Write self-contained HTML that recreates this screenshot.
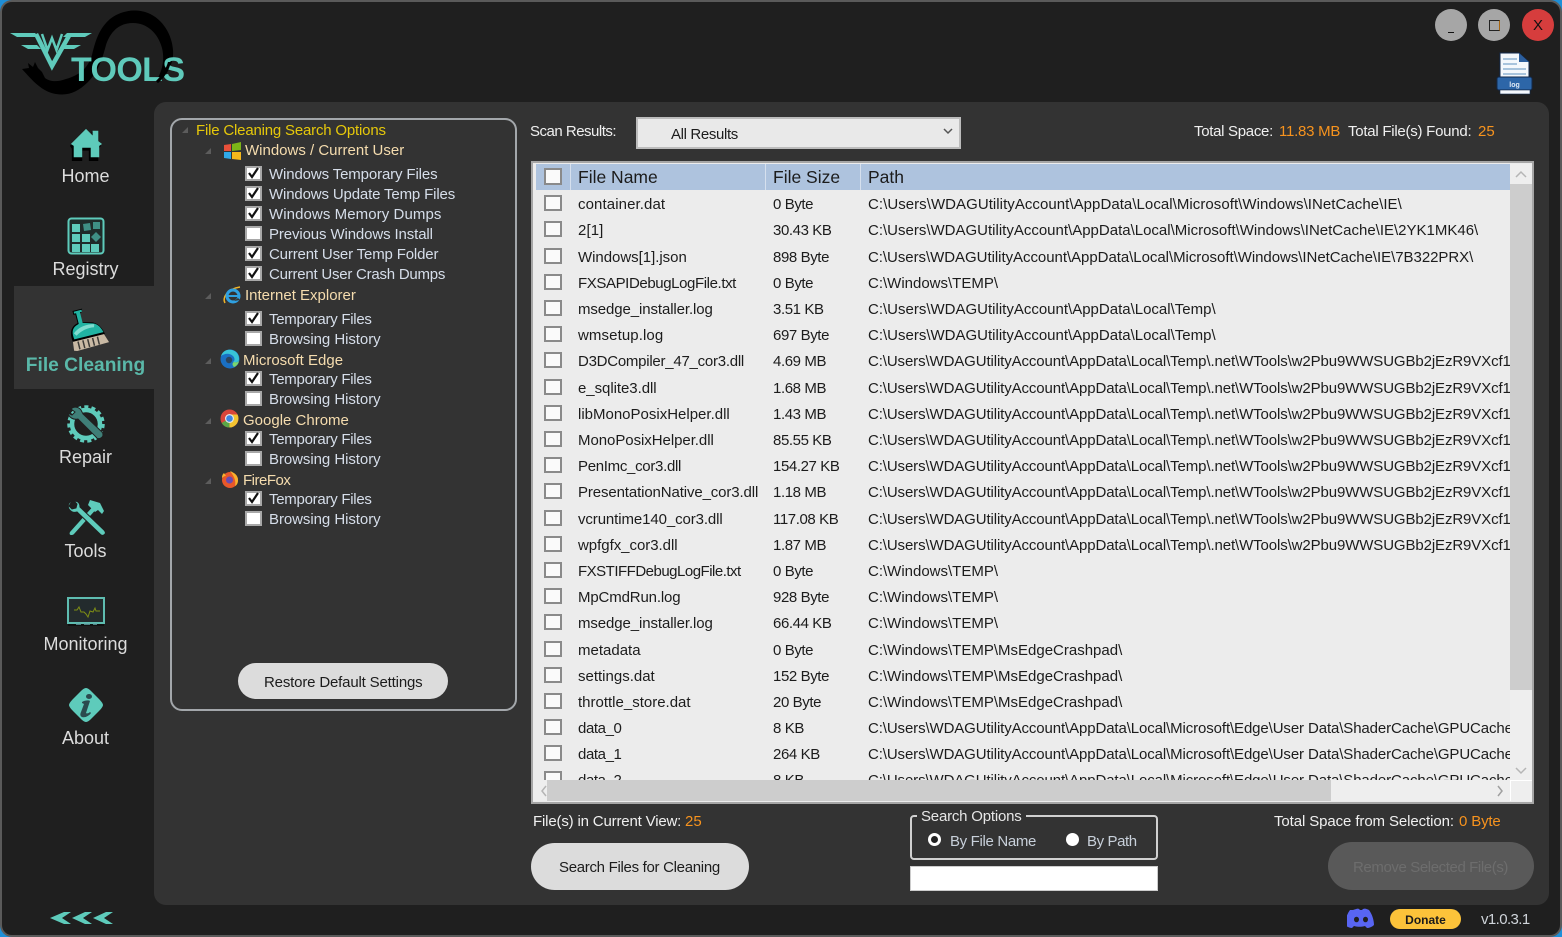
<!DOCTYPE html>
<html><head><meta charset="utf-8"><title>WTools</title>
<style>
*{box-sizing:border-box}
html,body{margin:0;padding:0;width:1562px;height:937px;overflow:hidden;background:#1e8fd8}
body{font-family:"Liberation Sans",sans-serif;position:relative}
#win{position:absolute;left:0;top:0;width:1562px;height:937px;background:#1f1f1f;border:2px solid #5a5a5a;border-radius:12px}
.a{position:absolute}
.t{position:absolute;white-space:nowrap;line-height:20px;height:20px;font-size:15px;color:#e6e6e6;margin-top:1px}
.nav{position:absolute;left:0;width:171px;text-align:center;font-size:18px;line-height:22px;color:#dcdcdc}
.o{color:#f7931e}
.cb{position:absolute;width:17px;height:15px;background:#fff;border:2px solid #a8a8a8}
.cb svg{position:absolute;left:0;top:-2px}
.l{position:absolute;left:269px;white-space:nowrap;line-height:20px;font-size:15px;color:#d6deea;margin-top:1px}
.tf{letter-spacing:-.27px}.bh{letter-spacing:-.06px}
.h{position:absolute;white-space:nowrap;line-height:20px;font-size:15px;color:#f5dcae;margin-top:1px}
.tri{position:absolute;width:0;height:0;border-left:6px solid transparent;border-bottom:6px solid #5c5c5c}
#list{position:absolute;left:536px;top:190px;width:974px;height:590px;overflow:hidden}
.r{position:absolute;left:0;width:974px;height:20px;color:#1c1c1c;font-size:15px;line-height:20px;white-space:nowrap}
.r i{position:absolute;left:8px;top:1px;width:18px;height:16px;background:#fafafa;border:2px solid #8a8a8a}
.r b,.r u,.r s{position:absolute;font-weight:400;text-decoration:none;top:1px}
.r b{left:42px}.r u{left:237px;letter-spacing:-.4px}.r s{left:332px}
.r s.n{letter-spacing:-.11px}
.hd{position:absolute;top:164px;color:#1c1c1c;font-size:17.5px;line-height:26px;white-space:nowrap}
</style></head><body>
<div id="win"></div>

<!-- logo -->
<svg class="a" style="left:0;top:0" width="200" height="105" viewBox="0 0 200 105">
<path d="M22 69L29 68 28 63 33 67 35 62 38 68 42 72 45 78C50 82 58 82 66 79 80 75 88 68 92 55 96 38 100 28 110 19 120 11 135 8 148 13 163 19 172 35 173 50 174 63 168 74 158 83L156 81C162 72 165 60 162 48 158 33 147 23 133 23 118 23 110 33 106 45 102 60 98 72 88 82 78 92 68 96 56 94 42 92 32 80 22 69Z" fill="#000"/>
<g fill="#5fcabb">
<path d="M10 33H35L39 37H17z"/><path d="M92 33H67L63 37H85z"/>
<path d="M21 45H37L41 49H28z"/><path d="M81 45H65L61 49H74z"/>
</g>
<g fill="none" stroke="#5fcabb" stroke-linejoin="miter">
<path d="M36 34L52 66 70 34" stroke-width="4.500"/>
<path d="M42 34L47.500 50 52 38 56.500 50 62 34" stroke-width="2.500"/>
</g>
<text x="71" y="81" font-family="Liberation Sans" font-weight="700" font-size="34" fill="#5fcabb" textLength="114" lengthAdjust="spacing">TOOLS</text>
<path d="M171 62C169 70 165 77 158 83L156 81C162 75 166 69 168 62z" fill="#000"/>
</svg>

<!-- top buttons -->
<div class="a" style="left:1435px;top:9px;width:32px;height:32px;border-radius:50%;background:#a6a6a6"></div>
<div class="a" style="left:1448px;top:32px;width:6px;height:1px;background:#111"></div>
<div class="a" style="left:1478px;top:9px;width:32px;height:32px;border-radius:50%;background:#a6a6a6"></div>
<div class="a" style="left:1489px;top:20px;width:11px;height:11px;border:1px solid #222;border-right-color:#a8650f"></div>
<div class="a" style="left:1522px;top:9px;width:32px;height:32px;border-radius:50%;background:#d63d3d"></div>
<div class="t" style="left:1522px;top:15px;width:32px;text-align:center;color:#111;font-size:15px">X</div>

<!-- log icon -->
<svg class="a" style="left:1495px;top:50px" width="40" height="46" viewBox="0 0 40 46">
<path d="M5 3h19l10 9v22H5z" fill="#f4f8fc" stroke="#11294d" stroke-width="1"/>
<path d="M24 3l10 9H24z" fill="#2c5f9e"/>
<path d="M8 8h14v2H8zM8 13h14v2H8zM8 18h23v2H8zM8 23h23v2H8zM8 28h23v2H8z" fill="#a8c4dd"/>
<rect x="2" y="27" width="35" height="13" rx="2" fill="#2d66a8" stroke="#11294d"/>
<text x="19.500" y="37" font-family="Liberation Sans" font-size="7" font-weight="700" fill="#dfe9f5" text-anchor="middle">log</text>
<rect x="5" y="40" width="30" height="4" fill="#f4f8fc" stroke="#11294d" stroke-width=".6"/>
</svg>

<!-- panel -->
<div class="a" style="left:154px;top:102px;width:1395px;height:803px;background:#333;border-radius:12px"></div>
<div class="a" style="left:14px;top:286px;width:141px;height:103px;background:#333"></div>

<!-- nav icons -->
<svg class="a" style="left:67px;top:127px" width="38" height="34" viewBox="0 0 40 36">
<path d="M4 19L20 2l7 7V4h6v11l4 4-3 3v13H24V24h-7v11H6V22z" fill="#000" transform="translate(-1 1)"/>
<path d="M4 18L20 2l7 7V4h6v11l4 3-3 2v12H25V22h-9v10H7V20z" fill="#5ecbbb"/>
</svg>
<svg class="a" style="left:67px;top:217px" width="38" height="38" viewBox="0 0 38 38">
<rect x="1.500" y="1.500" width="35" height="35" rx="3" fill="#1f2b2a" stroke="#5ecbbb" stroke-width="2"/>
<g fill="#5ecbbb"><rect x="5" y="7" width="8" height="8"/><rect x="5" y="17" width="8" height="8"/><rect x="15" y="17" width="8" height="8"/><rect x="5" y="27" width="8" height="8"/><rect x="15" y="27" width="8" height="8"/><rect x="24" y="27" width="8" height="8"/></g>
<g fill="#3f8f85"><path d="M16 7l7-1 1 7-7 1z"/><rect x="26" y="5" width="7" height="7"/><path d="M29 15l5 5-5 5-5-5z"/></g>
</svg>
<svg class="a" style="left:66px;top:306px;transform:rotate(-14deg)" width="42" height="44" viewBox="0 0 42 44">
<path d="M11 2h10l-2 4h-2v9l11 3c6 3 8 9 9 14H4c-1-7 0-13 6-16l3-1V6h-2z" fill="#000"/>
<path d="M12 3h8v2h-2v11l10 3c5 2 7 7 8 11H6c-1-6 0-11 5-13l3-1V5h-2z" fill="#21b3a2"/>
<path d="M7 24c6-5 14-6 22-4l-1 3c-6-1-13 0-19 4z" fill="#7fdccf"/>
<path d="M4 32h32l3 9-33 1-3-1z" fill="#c9b9a4"/>
<path d="M9 33v8M14 33v8M19 33v8M24 33v8M29 33v8" stroke="#3c3a36" stroke-width="1.500"/>
</svg>
<svg class="a" style="left:66px;top:404px" width="40" height="40" viewBox="0 0 40 40">
<g fill="none" stroke="#5ecbbb"><circle cx="20" cy="20" r="14" stroke-width="4.500"/><circle cx="20" cy="20" r="17" stroke-width="3.500" stroke-dasharray="4 3.120"/></g>
<path d="M5 5c3-3 8-2 10 1l2 4 19 18c2 2 1 5-1 6s-4 1-5-1L12 15c-4 1-9-1-10-6l4 2 3-3z" fill="#3f7f78" stroke="#1f1f1f"/>
</svg>
<svg class="a" style="left:66px;top:498px" width="40" height="40" viewBox="0 0 40 40">
<path d="M30 5L4 34c-1 2 0 3 1 3s2 0 3-1L33 8z" fill="#5ecbbb"/>
<path d="M24 2l10 3 4 8-2 3-4-4-3 2-7-7z" fill="#5ecbbb"/>
<path d="M6 3c-3 1-5 4-3 8 2 3 5 4 8 3l24 23c2 1 3 0 4-1s0-3-1-4L14 9c0-4-2-6-6-6l3 3-1 4-4 1-3-3z" fill="#5ecbbb" stroke="#1f1f1f" stroke-width="1"/>
</svg>
<svg class="a" style="left:67px;top:596px" width="38" height="32" viewBox="0 0 38 32">
<rect x="1" y="2" width="36" height="25" fill="#232b2d" stroke="#5ebcb0" stroke-width="2"/>
<path d="M7 14h3l2-3 2 5h3l2 2 2 3 2-6 3 1 2-4 1 3h4" fill="none" stroke="#7f8f14" stroke-width="1"/>
<path d="M1 29h36" stroke="#000" stroke-width="1"/>
<path d="M9 28h5M17 28h6M26 28h4" stroke="#6aa" stroke-width="1.500"/>
</svg>
<svg class="a" style="left:68px;top:687px" width="36" height="36" viewBox="0 0 36 36">
<path d="M18 1c2 0 4 2 6 4l7 7c3 3 4 5 4 6s-1 3-4 6l-7 7c-2 2-4 4-6 4s-4-2-6-4l-7-7c-3-3-4-5-4-6s1-3 4-6l7-7c2-2 4-4 6-4z" fill="#5ecbbb"/>
<ellipse cx="21" cy="9.500" rx="3" ry="2.500" fill="#2b4a4e"/>
<path d="M14 15c3-2 7-2 8-1l-4 12c1 1 3 0 4-1l1 1c-2 3-6 5-9 4-2-1-2-3-1-5l3-8-2-1z" fill="#2b4a4e"/>
</svg>

<div class="nav" style="top:165px">Home</div>
<div class="nav" style="top:258px">Registry</div>
<div class="nav" style="top:355px;font-weight:700;font-size:19.200px;color:#5ab8a9">File Cleaning</div>
<div class="nav" style="top:446px">Repair</div>
<div class="nav" style="top:540px">Tools</div>
<div class="nav" style="top:633px">Monitoring</div>
<div class="nav" style="top:727px">About</div>

<svg class="a" style="left:48px;top:909px" width="68" height="20" viewBox="0 0 68 20">
<path d="M2 9L16 3h7l-9 6 9 6h-7zM24 9l13-6h7l-9 6 9 6h-7zM45 9l13-6h7l-9 6 9 6h-7z" fill="#5ecbbb"/>
</svg>

<!-- group left -->
<div class="a" style="left:170px;top:118px;width:347px;height:593px;border:2px solid #a3a7ab;border-radius:12px"></div>
<div class="tri" style="left:182px;top:127px"></div>
<div class="h" style="left:196px;top:120px;color:#e6c80a;letter-spacing:-.19px">File Cleaning Search Options</div>
<div class="tri" style="left:205px;top:148px"></div>
<svg class="a" style="left:224px;top:142px" width="17" height="18" viewBox="0 0 17 18">
<path d="M0 3l7-1v7H0z" fill="#e8503a"/><path d="M8 2l9-2v8l-9 1z" fill="#7cb518"/><path d="M0 10h7v7l-7-1z" fill="#2fa8e8"/><path d="M8 10l9 0v8l-9-1z" fill="#f5b81c"/>
</svg>
<div class="h" style="left:245px;top:140px">Windows / Current User</div>
<div class="l" style="top:164px;letter-spacing:-.13px">Windows Temporary Files</div>
<div class="l" style="top:184px;letter-spacing:-.15px">Windows Update Temp Files</div>
<div class="l" style="top:204px;letter-spacing:.08px">Windows Memory Dumps</div>
<div class="l" style="top:224px;letter-spacing:-.12px">Previous Windows Install</div>
<div class="l" style="top:244px;letter-spacing:-.16px">Current User Temp Folder</div>
<div class="l" style="top:264px;letter-spacing:-.23px">Current User Crash Dumps</div>
<div class="tri" style="left:205px;top:293px"></div>
<svg class="a" style="left:223px;top:286px" width="19" height="19" viewBox="0 0 19 19">
<path d="M2 17C-1 12 4 3 17 1" fill="none" stroke="#f0b429" stroke-width="1.500"/>
<circle cx="10" cy="10" r="6" fill="none" stroke="#2fa0e0" stroke-width="3"/>
<path d="M5 10h11" stroke="#2fa0e0" stroke-width="2"/>
<path d="M11 15l6-1-2-2z" fill="#333"/>
</svg>
<div class="h" style="left:245px;top:285px">Internet Explorer</div>
<div class="l tf" style="top:309px">Temporary Files</div>
<div class="l bh" style="top:329px">Browsing History</div>
<div class="tri" style="left:205px;top:358px"></div>
<svg class="a" style="left:220px;top:349px" width="20" height="20" viewBox="0 0 20 20">
<circle cx="10" cy="10" r="9.500" fill="#1a70c4"/>
<path d="M1 7C3 1 9 0 12 1c4 1 7 4 7 9 0 3-3 4-6 3 2-1 2-4 0-6-3-3-8-3-12 0z" fill="#38c4d8"/>
<path d="M19 11c0 2-3 3-5 2-2 1-2 3 0 5 3-1 5-4 5-7z" fill="#7bd66e"/>
<circle cx="9" cy="11" r="3.200" fill="#333" opacity=".7"/>
</svg>
<div class="h" style="left:243px;top:350px">Microsoft Edge</div>
<div class="l tf" style="top:369px">Temporary Files</div>
<div class="l bh" style="top:389px">Browsing History</div>
<div class="tri" style="left:205px;top:418px"></div>
<svg class="a" style="left:220px;top:409px" width="19" height="19" viewBox="0 0 19 19">
<circle cx="9.500" cy="9.500" r="9" fill="#d9463a"/>
<path d="M9.500 9.500L1.700 14a9 9 0 0 0 7.800 4.500c1 0 2 0 3-.5z" fill="#5aa646"/>
<path d="M9.500 5.500h8A9 9 0 0 1 9.500 18.500z" fill="#f3c431"/>
<circle cx="9.500" cy="9.500" r="4.500" fill="#e8e8e8"/><circle cx="9.500" cy="9.500" r="3.300" fill="#3f85e0"/>
</svg>
<div class="h" style="left:243px;top:410px">Google Chrome</div>
<div class="l tf" style="top:429px">Temporary Files</div>
<div class="l bh" style="top:449px">Browsing History</div>
<div class="tri" style="left:205px;top:478px"></div>
<svg class="a" style="left:221px;top:470px" width="18" height="18" viewBox="0 0 18 18">
<circle cx="9" cy="10" r="8" fill="#e8582a"/>
<path d="M9 1c5 2 8 5 8 9 0 3-1 5-3 6 1-4 0-9-5-15z" fill="#f7b22c"/>
<path d="M1 8c0-3 1-4 2-5l2 3c-2 0-3 1-4 2z" fill="#f7b22c"/>
<circle cx="8.500" cy="10" r="3.500" fill="#6a4bb0"/>
</svg>
<div class="h" style="left:243px;top:470px;letter-spacing:-.5px">FireFox</div>
<div class="l tf" style="top:489px">Temporary Files</div>
<div class="l bh" style="top:509px">Browsing History</div>

<!-- left checkboxes -->
<div class="cb" style="left:245px;top:166px"><svg width="13" height="14" viewBox="0 0 13 14"><path d="M2 7l3 4 6-9" fill="none" stroke="#111" stroke-width="2.200"/></svg></div>
<div class="cb" style="left:245px;top:186px"><svg width="13" height="14" viewBox="0 0 13 14"><path d="M2 7l3 4 6-9" fill="none" stroke="#111" stroke-width="2.200"/></svg></div>
<div class="cb" style="left:245px;top:206px"><svg width="13" height="14" viewBox="0 0 13 14"><path d="M2 7l3 4 6-9" fill="none" stroke="#111" stroke-width="2.200"/></svg></div>
<div class="cb" style="left:245px;top:226px"></div>
<div class="cb" style="left:245px;top:246px"><svg width="13" height="14" viewBox="0 0 13 14"><path d="M2 7l3 4 6-9" fill="none" stroke="#111" stroke-width="2.200"/></svg></div>
<div class="cb" style="left:245px;top:266px"><svg width="13" height="14" viewBox="0 0 13 14"><path d="M2 7l3 4 6-9" fill="none" stroke="#111" stroke-width="2.200"/></svg></div>
<div class="cb" style="left:245px;top:311px"><svg width="13" height="14" viewBox="0 0 13 14"><path d="M2 7l3 4 6-9" fill="none" stroke="#111" stroke-width="2.200"/></svg></div>
<div class="cb" style="left:245px;top:331px"></div>
<div class="cb" style="left:245px;top:371px"><svg width="13" height="14" viewBox="0 0 13 14"><path d="M2 7l3 4 6-9" fill="none" stroke="#111" stroke-width="2.200"/></svg></div>
<div class="cb" style="left:245px;top:391px"></div>
<div class="cb" style="left:245px;top:431px"><svg width="13" height="14" viewBox="0 0 13 14"><path d="M2 7l3 4 6-9" fill="none" stroke="#111" stroke-width="2.200"/></svg></div>
<div class="cb" style="left:245px;top:451px"></div>
<div class="cb" style="left:245px;top:491px"><svg width="13" height="14" viewBox="0 0 13 14"><path d="M2 7l3 4 6-9" fill="none" stroke="#111" stroke-width="2.200"/></svg></div>
<div class="cb" style="left:245px;top:511px"></div>

<div class="a" style="left:238px;top:663px;width:210px;height:36px;border-radius:18px;background:#dcdcdc"></div>
<div class="t" style="left:264px;top:672px;color:#1c1c1c;letter-spacing:-.17px">Restore Default Settings</div>

<!-- top right -->
<div class="t" style="left:530px;top:121px;color:#f0f0f0;letter-spacing:-.5px">Scan Results:</div>
<div class="a" style="left:636px;top:117px;width:325px;height:32px;background:#e9e9e9;border:2px solid #bcbcbc"></div>
<div class="t" style="left:671px;top:124px;color:#1c1c1c;letter-spacing:-.36px">All Results</div>
<svg class="a" style="left:943px;top:127px" width="10" height="8" viewBox="0 0 10 8"><path d="M1 2l4 4 4-4" fill="none" stroke="#555" stroke-width="1.500"/></svg>
<div class="t" style="left:1194px;top:121px;color:#f0f0f0;letter-spacing:-.3px">Total Space:</div>
<div class="t o" style="left:1279px;top:121px;letter-spacing:-.25px">11.83 MB</div>
<div class="t" style="left:1348px;top:121px;color:#f0f0f0;letter-spacing:-.25px">Total File(s) Found:</div>
<div class="t o" style="left:1478px;top:121px">25</div>

<!-- table -->
<div class="a" style="left:531px;top:161px;width:1003px;height:643px;background:#ececec;border:2px solid #a6a6a6"></div>
<div class="a" style="left:536px;top:164px;width:974px;height:26px;background:#aec3de"></div>
<div class="a" style="left:570px;top:164px;width:1px;height:26px;background:#d6e0ee"></div>
<div class="a" style="left:765px;top:164px;width:1px;height:26px;background:#d6e0ee"></div>
<div class="a" style="left:860px;top:164px;width:1px;height:26px;background:#d6e0ee"></div>
<div class="a" style="left:544px;top:168px;width:18px;height:17px;background:#fafafa;border:2px solid #8a8a8a"></div>
<div class="hd" style="left:578px">File Name</div>
<div class="hd" style="left:773px">File Size</div>
<div class="hd" style="left:868px">Path</div>

<div id="list">
<div class="r" style="top:4px"><i></i><b style="letter-spacing:.1px">container.dat</b><u>0 Byte</u><s style="letter-spacing:.05px">C:\Users\WDAGUtilityAccount\AppData\Local\Microsoft\Windows\INetCache\IE\</s></div>
<div class="r" style="top:30px"><i></i><b style="letter-spacing:.1px">2[1]</b><u>30.43 KB</u><s>C:\Users\WDAGUtilityAccount\AppData\Local\Microsoft\Windows\INetCache\IE\2YK1MK46\</s></div>
<div class="r" style="top:57px"><i></i><b style="letter-spacing:-.03px">Windows[1].json</b><u>898 Byte</u><s style="letter-spacing:-.04px">C:\Users\WDAGUtilityAccount\AppData\Local\Microsoft\Windows\INetCache\IE\7B322PRX\</s></div>
<div class="r" style="top:83px"><i></i><b style="letter-spacing:-.4px">FXSAPIDebugLogFile.txt</b><u>0 Byte</u><s>C:\Windows\TEMP\</s></div>
<div class="r" style="top:109px"><i></i><b style="letter-spacing:-.1px">msedge_installer.log</b><u>3.51 KB</u><s>C:\Users\WDAGUtilityAccount\AppData\Local\Temp\</s></div>
<div class="r" style="top:135px"><i></i><b style="letter-spacing:.1px">wmsetup.log</b><u>697 Byte</u><s>C:\Users\WDAGUtilityAccount\AppData\Local\Temp\</s></div>
<div class="r" style="top:161px"><i></i><b style="letter-spacing:-.25px">D3DCompiler_47_cor3.dll</b><u>4.69 MB</u><s class="n">C:\Users\WDAGUtilityAccount\AppData\Local\Temp\.net\WTools\w2Pbu9WWSUGBb2jEzR9VXcf12</s></div>
<div class="r" style="top:188px"><i></i><b style="letter-spacing:-.05px">e_sqlite3.dll</b><u>1.68 MB</u><s class="n">C:\Users\WDAGUtilityAccount\AppData\Local\Temp\.net\WTools\w2Pbu9WWSUGBb2jEzR9VXcf12</s></div>
<div class="r" style="top:214px"><i></i><b>libMonoPosixHelper.dll</b><u>1.43 MB</u><s class="n">C:\Users\WDAGUtilityAccount\AppData\Local\Temp\.net\WTools\w2Pbu9WWSUGBb2jEzR9VXcf12</s></div>
<div class="r" style="top:240px"><i></i><b style="letter-spacing:-.05px">MonoPosixHelper.dll</b><u>85.55 KB</u><s class="n">C:\Users\WDAGUtilityAccount\AppData\Local\Temp\.net\WTools\w2Pbu9WWSUGBb2jEzR9VXcf12</s></div>
<div class="r" style="top:266px"><i></i><b style="letter-spacing:-.3px">PenImc_cor3.dll</b><u>154.27 KB</u><s class="n">C:\Users\WDAGUtilityAccount\AppData\Local\Temp\.net\WTools\w2Pbu9WWSUGBb2jEzR9VXcf12</s></div>
<div class="r" style="top:292px"><i></i><b style="letter-spacing:-.12px">PresentationNative_cor3.dll</b><u>1.18 MB</u><s class="n">C:\Users\WDAGUtilityAccount\AppData\Local\Temp\.net\WTools\w2Pbu9WWSUGBb2jEzR9VXcf12</s></div>
<div class="r" style="top:319px"><i></i><b style="letter-spacing:-.1px">vcruntime140_cor3.dll</b><u>117.08 KB</u><s class="n">C:\Users\WDAGUtilityAccount\AppData\Local\Temp\.net\WTools\w2Pbu9WWSUGBb2jEzR9VXcf12</s></div>
<div class="r" style="top:345px"><i></i><b style="letter-spacing:-.03px">wpfgfx_cor3.dll</b><u>1.87 MB</u><s class="n">C:\Users\WDAGUtilityAccount\AppData\Local\Temp\.net\WTools\w2Pbu9WWSUGBb2jEzR9VXcf12</s></div>
<div class="r" style="top:371px"><i></i><b style="letter-spacing:-.5px">FXSTIFFDebugLogFile.txt</b><u>0 Byte</u><s>C:\Windows\TEMP\</s></div>
<div class="r" style="top:397px"><i></i><b style="letter-spacing:-.15px">MpCmdRun.log</b><u>928 Byte</u><s>C:\Windows\TEMP\</s></div>
<div class="r" style="top:423px"><i></i><b style="letter-spacing:-.1px">msedge_installer.log</b><u>66.44 KB</u><s>C:\Windows\TEMP\</s></div>
<div class="r" style="top:450px"><i></i><b>metadata</b><u>0 Byte</u><s>C:\Windows\TEMP\MsEdgeCrashpad\</s></div>
<div class="r" style="top:476px"><i></i><b>settings.dat</b><u>152 Byte</u><s>C:\Windows\TEMP\MsEdgeCrashpad\</s></div>
<div class="r" style="top:502px"><i></i><b>throttle_store.dat</b><u>20 Byte</u><s>C:\Windows\TEMP\MsEdgeCrashpad\</s></div>
<div class="r" style="top:528px"><i></i><b style="letter-spacing:-.4px">data_0</b><u>8 KB</u><s class="n">C:\Users\WDAGUtilityAccount\AppData\Local\Microsoft\Edge\User Data\ShaderCache\GPUCache\</s></div>
<div class="r" style="top:554px"><i></i><b style="letter-spacing:-.4px">data_1</b><u>264 KB</u><s class="n">C:\Users\WDAGUtilityAccount\AppData\Local\Microsoft\Edge\User Data\ShaderCache\GPUCache\</s></div>
<div class="r" style="top:580px"><i></i><b style="letter-spacing:-.4px">data_2</b><u>8 KB</u><s class="n">C:\Users\WDAGUtilityAccount\AppData\Local\Microsoft\Edge\User Data\ShaderCache\GPUCache\</s></div>
</div>

<!-- scrollbars -->
<div class="a" style="left:1510px;top:164px;width:22px;height:616px;background:#eee"></div>
<div class="a" style="left:1510px;top:184px;width:22px;height:506px;background:#cdcdcd"></div>
<svg class="a" style="left:1515px;top:170px" width="12" height="8" viewBox="0 0 12 8"><path d="M1 7l5-5 5 5" fill="none" stroke="#b5b5b5" stroke-width="1.500"/></svg>
<svg class="a" style="left:1515px;top:767px" width="12" height="8" viewBox="0 0 12 8"><path d="M1 1l5 5 5-5" fill="none" stroke="#b5b5b5" stroke-width="1.500"/></svg>
<div class="a" style="left:533px;top:780px;width:977px;height:21px;background:#eee"></div>
<div class="a" style="left:547px;top:780px;width:784px;height:21px;background:#cdcdcd"></div>
<svg class="a" style="left:540px;top:785px" width="8" height="12" viewBox="0 0 8 12"><path d="M6 1L2 6l4 5" fill="none" stroke="#b5b5b5" stroke-width="1.500"/></svg>
<svg class="a" style="left:1496px;top:785px" width="8" height="12" viewBox="0 0 8 12"><path d="M2 1l4 5-4 5" fill="none" stroke="#a0a0a0" stroke-width="1.500"/></svg>
<div class="a" style="left:1510px;top:780px;width:22px;height:21px;background:#eee;border-left:1px solid #fff;border-top:1px solid #fff"></div>

<!-- bottom -->
<div class="t" style="left:533px;top:811px;color:#f0f0f0;letter-spacing:-.17px">File(s) in Current View:</div>
<div class="t o" style="left:685px;top:811px">25</div>
<div class="a" style="left:531px;top:843px;width:218px;height:47px;border-radius:24px;background:#dcdcdc"></div>
<div class="t" style="left:559px;top:857px;color:#1c1c1c;letter-spacing:-.3px">Search Files for Cleaning</div>
<div class="a" style="left:910px;top:815px;width:248px;height:45px;border:2px solid #d0d0d0;border-radius:4px"></div>
<div class="t" style="left:917px;top:806px;background:#333;padding:0 4px;color:#e6e6e6;letter-spacing:-.2px">Search Options</div>
<div class="a" style="left:928px;top:833px;width:13px;height:13px;border-radius:50%;background:#fff;border:3px solid #fff"></div>
<div class="a" style="left:931px;top:836px;width:7px;height:7px;border-radius:50%;background:#222"></div>
<div class="t" style="left:950px;top:831px;color:#c8d0da;letter-spacing:-.33px">By File Name</div>
<div class="a" style="left:1066px;top:833px;width:13px;height:13px;border-radius:50%;background:#fff"></div>
<div class="t" style="left:1087px;top:831px;color:#c8d0da;letter-spacing:-.4px">By Path</div>
<div class="a" style="left:910px;top:866px;width:248px;height:25px;background:#fff;border:1px solid #ccc"></div>
<div class="t" style="left:1274px;top:811px;color:#f0f0f0;letter-spacing:-.1px">Total Space from Selection:</div>
<div class="t o" style="left:1459px;top:811px;letter-spacing:-.15px">0 Byte</div>
<div class="a" style="left:1328px;top:842px;width:206px;height:48px;border-radius:24px;background:#595959"></div>
<div class="t" style="left:1353px;top:857px;color:#6d6d6d;letter-spacing:-.4px">Remove Selected File(s)</div>

<!-- footer -->
<svg class="a" style="left:1347px;top:908px" width="28" height="21" viewBox="0 0 28 21">
<path d="M6 2c3-1 5-2 6-1l1 1h2l1-1c2-1 4 0 6 1 3 4 5 10 5 15-2 2-5 3-7 3l-2-2c-4 1-7 1-11 0l-2 2c-2 0-5-1-7-3 0-5 2-11 5-15z" fill="#5865f2"/>
<ellipse cx="9.500" cy="11.500" rx="2.500" ry="2.800" fill="#1f1f1f"/><ellipse cx="18.500" cy="11.500" rx="2.500" ry="2.800" fill="#1f1f1f"/>
</svg>
<div class="a" style="left:1390px;top:909px;width:71px;height:20px;border-radius:10px;background:#fcc33a"></div>
<div class="t" style="left:1390px;top:909px;width:71px;text-align:center;color:#1a1a1a;font-size:12px;font-weight:700">Donate</div>
<div class="t" style="left:1481px;top:909px;color:#cfd4da;font-size:15px;letter-spacing:-.6px">v1.0.3.1</div>
</body></html>
